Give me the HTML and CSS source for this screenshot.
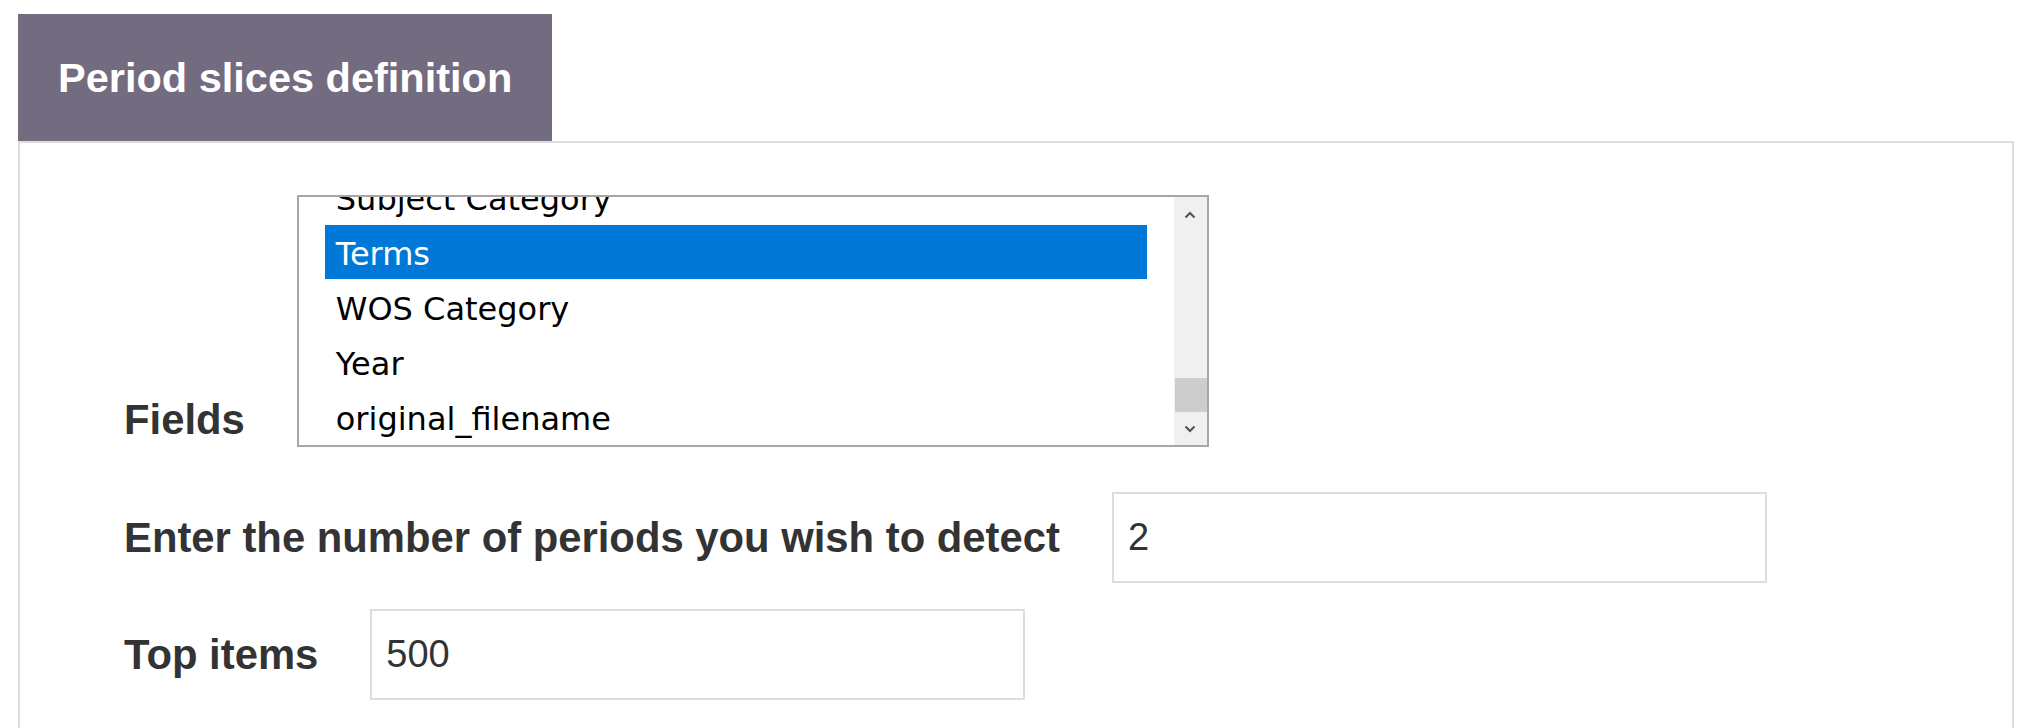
FILE: index.html
```html
<!DOCTYPE html>
<html lang="en">
<head>
<meta charset="utf-8">
<title>Period slices definition</title>
<link rel="stylesheet" href="styles.css">
</head>
<body>
<div class="page">
  <div class="tab">Period slices definition</div>
  <div class="panel">
    <div class="row row-fields">
      <label class="label label-fields">Fields</label>
      <div class="listbox">
        <div class="list">
          <div class="options">
            <div class="option">Subject Category</div>
            <div class="option selected">Terms</div>
            <div class="option">WOS Category</div>
            <div class="option">Year</div>
            <div class="option">original_filename</div>
          </div>
        </div>
        <div class="scrollbar">
          <div class="sb-btn sb-up">
            <svg width="12" height="8" viewBox="0 0 12 8"><polyline points="1.5,6.5 6,2 10.5,6.5" fill="none" stroke="#555555" stroke-width="2.2"/></svg>
          </div>
          <div class="sb-track"><div class="sb-thumb"></div></div>
          <div class="sb-btn sb-down">
            <svg width="12" height="8" viewBox="0 0 12 8"><polyline points="1.5,1.5 6,6 10.5,1.5" fill="none" stroke="#555555" stroke-width="2.2"/></svg>
          </div>
        </div>
      </div>
    </div>
    <div class="row row-periods">
      <label class="label">Enter the number of periods you wish to detect</label>
      <div class="input">2</div>
    </div>
    <div class="row row-top">
      <label class="label">Top items</label>
      <div class="input">500</div>
    </div>
  </div>
</div>
</body>
</html>
```

FILE: styles.css
```css
html, body {
  margin: 0;
  padding: 0;
  background: #ffffff;
}

body {
  font-family: "Liberation Sans", Arial, sans-serif;
  color: #333333;
}

.page {
  padding: 14px 14px 0 18px;
}

.tab {
  display: inline-flex;
  align-items: center;
  height: 127px;
  padding: 0 40px 0 40px;
  background: #736b7f;
  color: #ffffff;
  font-weight: bold;
  font-size: 41.5px;
  box-sizing: border-box;
  vertical-align: top;
}

.panel {
  border: 2px solid #dddddd;
  border-bottom: none;
  height: 600px;
  padding: 52px 0 0 104px;
  box-sizing: border-box;
}

.row {
  display: flex;
}

.row-fields {
  align-items: flex-end;
  margin-bottom: 45px;
}

.row-periods {
  align-items: center;
  margin-bottom: 26px;
}

.row-top {
  align-items: center;
}

.label {
  font-weight: bold;
  font-size: 41.8px;
  color: #333333;
  margin-right: 52px;
  white-space: nowrap;
}

.label-fields {
  margin-bottom: 3px;
}

.listbox {
  display: flex;
  width: 912px;
  height: 252px;
  border: 2px solid #a6a6a6;
  box-sizing: border-box;
  background: #ffffff;
}

.list {
  flex: 1;
  overflow: hidden;
  padding: 0 27px 0 26px;
}

.options {
  margin-top: -27px;
}

.option {
  height: 55px;
  line-height: 53px;
  padding: 3px 0 0 11px;
  box-sizing: border-box;
  font-family: "DejaVu Sans", Verdana, sans-serif;
  font-size: 32px;
  color: #000000;
  white-space: nowrap;
}

.option.selected {
  background: #0078d7;
  color: #ffffff;
  height: 54px;
  margin-bottom: 1px;
}

.scrollbar {
  width: 33px;
  display: flex;
  flex-direction: column;
  background: #f0f0f0;
}

.sb-btn {
  display: flex;
  align-items: center;
  justify-content: center;
}

.sb-up {
  height: 36px;
}

.sb-down {
  height: 33px;
}

.sb-track {
  flex: 1;
  display: flex;
  flex-direction: column;
  justify-content: flex-end;
}

.sb-thumb {
  height: 34px;
  margin-left: 1px;
  background: #cdcdcd;
}

.input {
  width: 655px;
  height: 91px;
  border: 2px solid #dddddd;
  box-sizing: border-box;
  padding: 0 14px;
  display: flex;
  align-items: center;
  font-size: 38px;
  color: #333333;
}
```
